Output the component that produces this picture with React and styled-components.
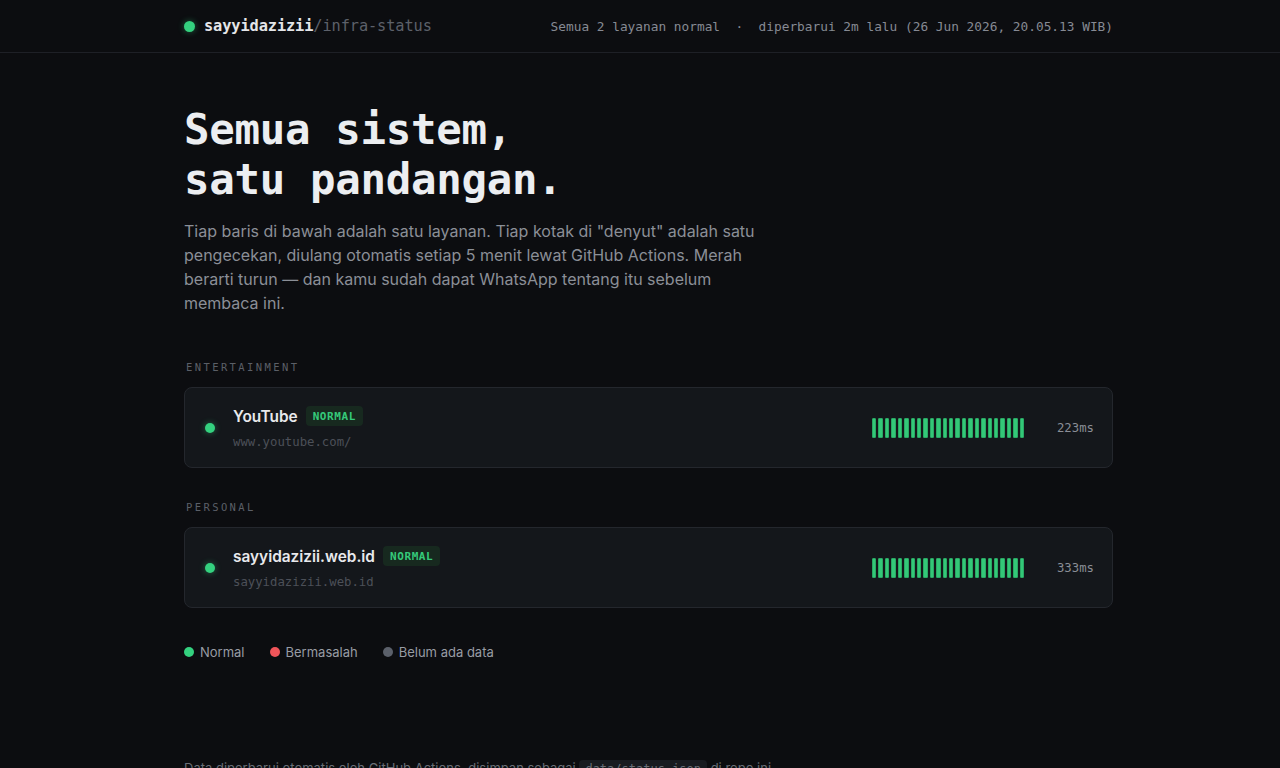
import styled, { createGlobalStyle } from 'styled-components';

const mono = `"DejaVu Sans Mono", "Liberation Mono", monospace`;
const sans = `Inter, "Noto Sans", sans-serif`;

const GlobalStyle = createGlobalStyle`
  html, body {
    margin: 0;
    background: #0c0d10;
    color: #e6e7ea;
    font-family: ${sans};
  }
  * { box-sizing: border-box; }
`;

const TopBar = styled.header`
  height: 53px;
  border-bottom: 1px solid #1e2026;
`;

const Wrap = styled.div`
  width: 929px;
  margin-left: calc(50% - 456px);
`;

const TopInner = styled(Wrap)`
  height: 52px;
  display: flex;
  align-items: center;
  justify-content: space-between;
`;

const Brand = styled.div`
  display: flex;
  align-items: center;
  gap: 9px;
  font-family: ${mono};
  font-size: 15.3px;
  letter-spacing: -0.1px;
`;

const Dot = styled.span`
  width: ${p => p.$size || 10}px;
  height: ${p => p.$size || 10}px;
  border-radius: 50%;
  background: ${p => p.$color || '#34d17f'};
  box-shadow: ${p => (p.$glow ? '0 0 6px rgba(52, 209, 127, 0.45)' : 'none')};
  flex-shrink: 0;
`;

const Owner = styled.span`
  color: #e4e5e8;
  font-weight: 700;
`;

const Repo = styled.span`
  color: #5d616a;
`;

const Meta = styled.div`
  font-family: ${mono};
  font-size: 12.8px;
  color: #868a93;
  white-space: pre;
`;

const Main = styled(Wrap)`
  padding-top: 52px;
`;

const Title = styled.h1`
  margin: 0;
  font-family: ${mono};
  font-size: 42.4px;
  line-height: 50px;
  font-weight: 700;
  letter-spacing: -0.3px;
  color: #eceef1;
`;

const Lead = styled.p`
  margin: 14px 0 0;
  max-width: 580px;
  font-size: 16px;
  line-height: 24px;
  color: #8b8f97;
`;

const SectionLabel = styled.div`
  margin: ${p => (p.$first ? '46px' : '33px')} 0 14px 2px;
  font-family: ${mono};
  font-size: 10.5px;
  letter-spacing: 2.4px;
  color: #5b5f67;
`;

const Card = styled.div`
  height: 81px;
  display: flex;
  align-items: center;
  padding: 0 18px 0 20px;
  background: #14171b;
  border: 1px solid #24272d;
  border-radius: 8px;
`;

const Info = styled.div`
  flex: 1;
  margin-left: 18px;
  display: flex;
  flex-direction: column;
  gap: 9px;
`;

const NameRow = styled.div`
  display: flex;
  align-items: center;
  gap: 8px;
`;

const Name = styled.span`
  font-size: 15.4px;
  font-weight: 600;
  color: #e8e9ec;
`;

const Badge = styled.span`
  font-family: ${mono};
  font-size: 11px;
  font-weight: 700;
  letter-spacing: 0.6px;
  color: #35c97a;
  background: #17291f;
  border-radius: 4px;
  padding: 4px 7px 3px;
`;

const Url = styled.span`
  font-family: ${mono};
  font-size: 12.3px;
  color: #4c5058;
`;

const Beats = styled.div`
  width: 152px;
  height: 20px;
  display: flex;
  gap: 2px;
`;

const Beat = styled.span`
  flex: 1;
  background: #33c878;
  border: 1px solid #2aa864;
  border-radius: 1px;
`;

const Latency = styled.span`
  width: 70px;
  text-align: right;
  font-family: ${mono};
  font-size: 12.3px;
  color: #8a8e96;
`;

const Legend = styled.div`
  margin-top: 36px;
  display: flex;
  gap: 25px;
  font-size: 13px;
  color: #989ca4;
`;

const LegendItem = styled.span`
  display: flex;
  align-items: center;
  gap: 6px;
`;

const Footer = styled.p`
  margin: 100px 0 0;
  font-size: 13px;
  color: #6a6e76;
`;

const Code = styled.code`
  font-family: ${mono};
  font-size: 12px;
  background: #181b20;
  border-radius: 4px;
  padding: 2px 6px;
`;

const groups = [
  { label: 'ENTERTAINMENT', name: 'YouTube', url: 'www.youtube.com/', ms: '223ms' },
  { label: 'PERSONAL', name: 'sayyidazizii.web.id', url: 'sayyidazizii.web.id', ms: '333ms' },
];

const beats = Array.from({ length: 24 });

export default function App() {
  return (
    <>
      <GlobalStyle />
      <TopBar>
        <TopInner>
          <Brand>
            <Dot $size={11} $glow />
            <span>
              <Owner>sayyidazizii</Owner>
              <Repo>/infra-status</Repo>
            </span>
          </Brand>
          <Meta>Semua 2 layanan normal  ·  diperbarui 2m lalu (26 Jun 2026, 20.05.13 WIB)</Meta>
        </TopInner>
      </TopBar>
      <Main>
        <Title>
          Semua sistem,
          <br />
          satu pandangan.
        </Title>
        <Lead>
          Tiap baris di bawah adalah satu layanan. Tiap kotak di "denyut" adalah satu
          pengecekan, diulang otomatis setiap 5 menit lewat GitHub Actions. Merah
          berarti turun — dan kamu sudah dapat WhatsApp tentang itu sebelum membaca ini.
        </Lead>
        {groups.map((g, i) => (
          <section key={g.label}>
            <SectionLabel $first={i === 0}>{g.label}</SectionLabel>
            <Card>
              <Dot $glow />
              <Info>
                <NameRow>
                  <Name>{g.name}</Name>
                  <Badge>NORMAL</Badge>
                </NameRow>
                <Url>{g.url}</Url>
              </Info>
              <Beats>
                {beats.map((_, j) => (
                  <Beat key={j} />
                ))}
              </Beats>
              <Latency>{g.ms}</Latency>
            </Card>
          </section>
        ))}
        <Legend>
          <LegendItem>
            <Dot $color="#34d17f" />
            Normal
          </LegendItem>
          <LegendItem>
            <Dot $color="#f0555a" />
            Bermasalah
          </LegendItem>
          <LegendItem>
            <Dot $color="#5b606a" />
            Belum ada data
          </LegendItem>
        </Legend>
        <Footer>
          Data diperbarui otomatis oleh GitHub Actions, disimpan sebagai <Code>data/status.json</Code> di repo ini.
        </Footer>
      </Main>
    </>
  );
}
